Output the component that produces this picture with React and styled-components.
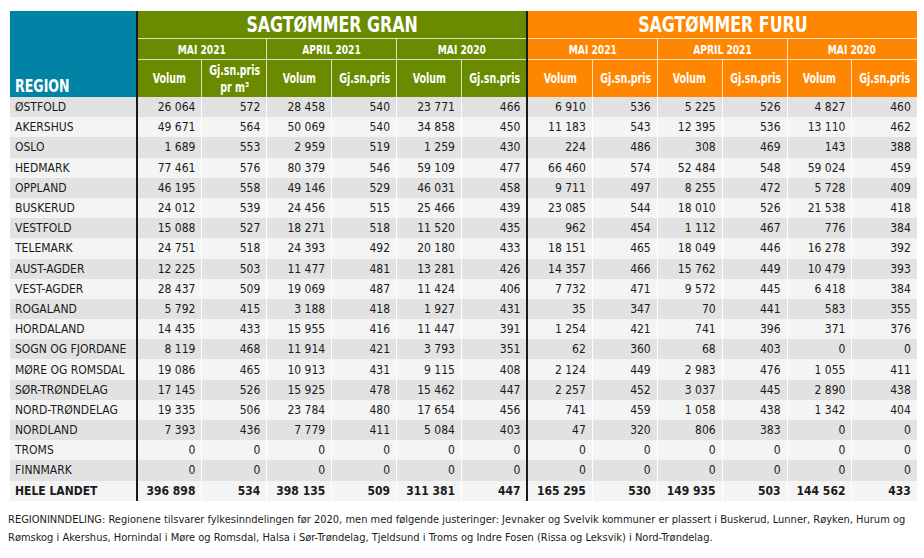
import React from 'react';
import styled, { createGlobalStyle } from 'styled-components';

const GlobalStyle = createGlobalStyle`
  body {
    margin: 0;
    background: #ffffff;
    font-family: "Liberation Sans Narrow", "DejaVu Sans Condensed", "Arial Narrow", sans-serif;
    color: #1a1a1a;
  }
`;

const BLUE = '#0083a5';
const GREEN = '#6a8b00';
const ORANGE = '#ff8600';
const DIV = '#1a1a1a';
const LINE = 'rgba(255,255,255,0.75)';

const Page = styled.div`
  width: 924px;
  height: 558px;
  padding: 11px 8px 0 10px;
  box-sizing: border-box;
  overflow: hidden;
`;

const Table = styled.table`
  width: 906px;
  border-collapse: collapse;
  table-layout: fixed;
`;

// the source font is a very condensed sans, so header text is squeezed sideways
const Squeeze = styled.span`
  display: inline-block;
  transform: scaleX(${(p) => p.$x || 0.8});
  transform-origin: ${(p) => p.$origin || 'center'};
  white-space: nowrap;
`;

const RegionHead = styled.th`
  background: ${BLUE};
  color: #fff;
  width: 125px;
  text-align: left;
  vertical-align: bottom;
  font-size: 17.5px;
  font-weight: 700;
  padding: 0 0 1px 5px;
  border-right: 2px solid ${DIV};
`;

const GroupTitle = styled.th`
  background: ${(p) => p.$bg};
  color: #fff;
  height: 27px;
  font-size: 22px;
  font-weight: 700;
  padding: 0;
  line-height: 27px;
  border-bottom: 1px solid ${LINE};
  border-right: ${(p) => (p.$edge ? `2px solid ${DIV}` : 'none')};
`;

const PeriodHead = styled.th`
  background: ${(p) => p.$bg};
  color: #fff;
  height: 20px;
  font-size: 13px;
  font-weight: 700;
  padding: 0;
  border-bottom: 1px solid ${LINE};
  border-left: ${(p) => (p.$first ? 'none' : `1px solid ${LINE}`)};
  border-right: ${(p) => (p.$edge ? `2px solid ${DIV}` : 'none')};
`;

const ColHead = styled.th`
  background: ${(p) => p.$bg};
  color: #fff;
  height: 37px;
  font-size: 13.5px;
  font-weight: 700;
  line-height: 17px;
  padding: 0;
  border-left: ${(p) => (p.$first ? 'none' : `1px solid ${LINE}`)};
  border-right: ${(p) => (p.$edge ? `2px solid ${DIV}` : 'none')};
`;

const Row = styled.tr`
  height: 20.2px;
  background: ${(p) => (p.$odd ? '#e2e2e2' : '#f4f4f4')};
  font-weight: ${(p) => (p.$total ? 700 : 400)};
`;

const RegionCell = styled.td`
  font-size: 12px;
  padding: 0 0 0 5px;
  white-space: nowrap;
  border-right: 2px solid ${DIV};
`;

const NumCell = styled.td`
  font-size: 12px;
  text-align: right;
  padding: 0 6px 0 0;
  white-space: nowrap;
  border-left: ${(p) => (p.$first ? 'none' : '1px solid #ffffff')};
  border-right: ${(p) => (p.$edge ? `2px solid ${DIV}` : 'none')};
`;

const Note = styled.p`
  margin: 10px 0 0 -2px;
  font-size: 11px;
  line-height: 18px;
  white-space: nowrap;
  color: #1a1a1a;
`;

const rows = [
  ['ØSTFOLD', '26 064', '572', '28 458', '540', '23 771', '466', '6 910', '536', '5 225', '526', '4 827', '460'],
  ['AKERSHUS', '49 671', '564', '50 069', '540', '34 858', '450', '11 183', '543', '12 395', '536', '13 110', '462'],
  ['OSLO', '1 689', '553', '2 959', '519', '1 259', '430', '224', '486', '308', '469', '143', '388'],
  ['HEDMARK', '77 461', '576', '80 379', '546', '59 109', '477', '66 460', '574', '52 484', '548', '59 024', '459'],
  ['OPPLAND', '46 195', '558', '49 146', '529', '46 031', '458', '9 711', '497', '8 255', '472', '5 728', '409'],
  ['BUSKERUD', '24 012', '539', '24 456', '515', '25 466', '439', '23 085', '544', '18 010', '526', '21 538', '418'],
  ['VESTFOLD', '15 088', '527', '18 271', '518', '11 520', '435', '962', '454', '1 112', '467', '776', '384'],
  ['TELEMARK', '24 751', '518', '24 393', '492', '20 180', '433', '18 151', '465', '18 049', '446', '16 278', '392'],
  ['AUST-AGDER', '12 225', '503', '11 477', '481', '13 281', '426', '14 357', '466', '15 762', '449', '10 479', '393'],
  ['VEST-AGDER', '28 437', '509', '19 069', '487', '11 424', '406', '7 732', '471', '9 572', '445', '6 418', '384'],
  ['ROGALAND', '5 792', '415', '3 188', '418', '1 927', '431', '35', '347', '70', '441', '583', '355'],
  ['HORDALAND', '14 435', '433', '15 955', '416', '11 447', '391', '1 254', '421', '741', '396', '371', '376'],
  ['SOGN OG FJORDANE', '8 119', '468', '11 914', '421', '3 793', '351', '62', '360', '68', '403', '0', '0'],
  ['MØRE OG ROMSDAL', '19 086', '465', '10 913', '431', '9 115', '408', '2 124', '449', '2 983', '476', '1 055', '411'],
  ['SØR-TRØNDELAG', '17 145', '526', '15 925', '478', '15 462', '447', '2 257', '452', '3 037', '445', '2 890', '438'],
  ['NORD-TRØNDELAG', '19 335', '506', '23 784', '480', '17 654', '456', '741', '459', '1 058', '438', '1 342', '404'],
  ['NORDLAND', '7 393', '436', '7 779', '411', '5 084', '403', '47', '320', '806', '383', '0', '0'],
  ['TROMS', '0', '0', '0', '0', '0', '0', '0', '0', '0', '0', '0', '0'],
  ['FINNMARK', '0', '0', '0', '0', '0', '0', '0', '0', '0', '0', '0', '0'],
  ['HELE LANDET', '396 898', '534', '398 135', '509', '311 381', '447', '165 295', '530', '149 935', '503', '144 562', '433'],
];

const periods = ['MAI 2021', 'APRIL 2021', 'MAI 2020'];
const groups = [
  { title: 'SAGTØMMER GRAN', bg: GREEN },
  { title: 'SAGTØMMER FURU', bg: ORANGE },
];

const App = () => {
  return (
    <Page>
      <GlobalStyle />
      <Table>
        <colgroup>
          <col style={{ width: 127 }} />
          {Array.from({ length: 12 }).map((_, i) => (
            <col key={i} style={{ width: i === 5 ? 66 : 64.9 }} />
          ))}
        </colgroup>
        <thead>
          <tr>
            <RegionHead rowSpan={3}>
              <Squeeze $origin="left">REGION</Squeeze>
            </RegionHead>
            {groups.map((g, gi) => (
              <GroupTitle key={g.title} colSpan={6} $bg={g.bg} $edge={gi === 0}>
                <Squeeze>{g.title}</Squeeze>
              </GroupTitle>
            ))}
          </tr>
          <tr>
            {groups.map((g, gi) =>
              periods.map((p, pi) => (
                <PeriodHead
                  key={g.title + p}
                  colSpan={2}
                  $bg={g.bg}
                  $first={pi === 0}
                  $edge={gi === 0 && pi === 2}
                >
                  <Squeeze $x={0.78}>{p}</Squeeze>
                </PeriodHead>
              ))
            )}
          </tr>
          <tr>
            {groups.map((g, gi) =>
              periods.map((p, pi) => (
                <React.Fragment key={g.title + p}>
                  <ColHead $bg={g.bg} $first={pi === 0}>
                    <Squeeze $x={0.78}>Volum</Squeeze>
                  </ColHead>
                  <ColHead $bg={g.bg} $edge={gi === 0 && pi === 2}>
                    <Squeeze $x={0.78}>
                      {gi === 0 && pi === 0 ? (
                        <>
                          Gj.sn.pris
                          <br />
                          pr m³
                        </>
                      ) : (
                        'Gj.sn.pris'
                      )}
                    </Squeeze>
                  </ColHead>
                </React.Fragment>
              ))
            )}
          </tr>
        </thead>
        <tbody>
          {rows.map((r, ri) => (
            <Row key={r[0]} $odd={ri % 2 === 0} $total={ri === rows.length - 1}>
              <RegionCell>{r[0]}</RegionCell>
              {r.slice(1).map((v, ci) => (
                <NumCell key={ci} $first={ci === 0 || ci === 6} $edge={ci === 5}>
                  {v}
                </NumCell>
              ))}
            </Row>
          ))}
        </tbody>
      </Table>
      <Note>
        REGIONINNDELING: Regionene tilsvarer fylkesinndelingen før 2020, men med følgende justeringer: Jevnaker og
        Svelvik kommuner er plassert i Buskerud, Lunner, Røyken, Hurum og
        <br />
        Rømskog i Akershus, Hornindal i Møre og Romsdal, Halsa i Sør-Trøndelag, Tjeldsund i Troms og Indre Fosen
        (Rissa og Leksvik) i Nord-Trøndelag.
      </Note>
    </Page>
  );
};

export default App;
